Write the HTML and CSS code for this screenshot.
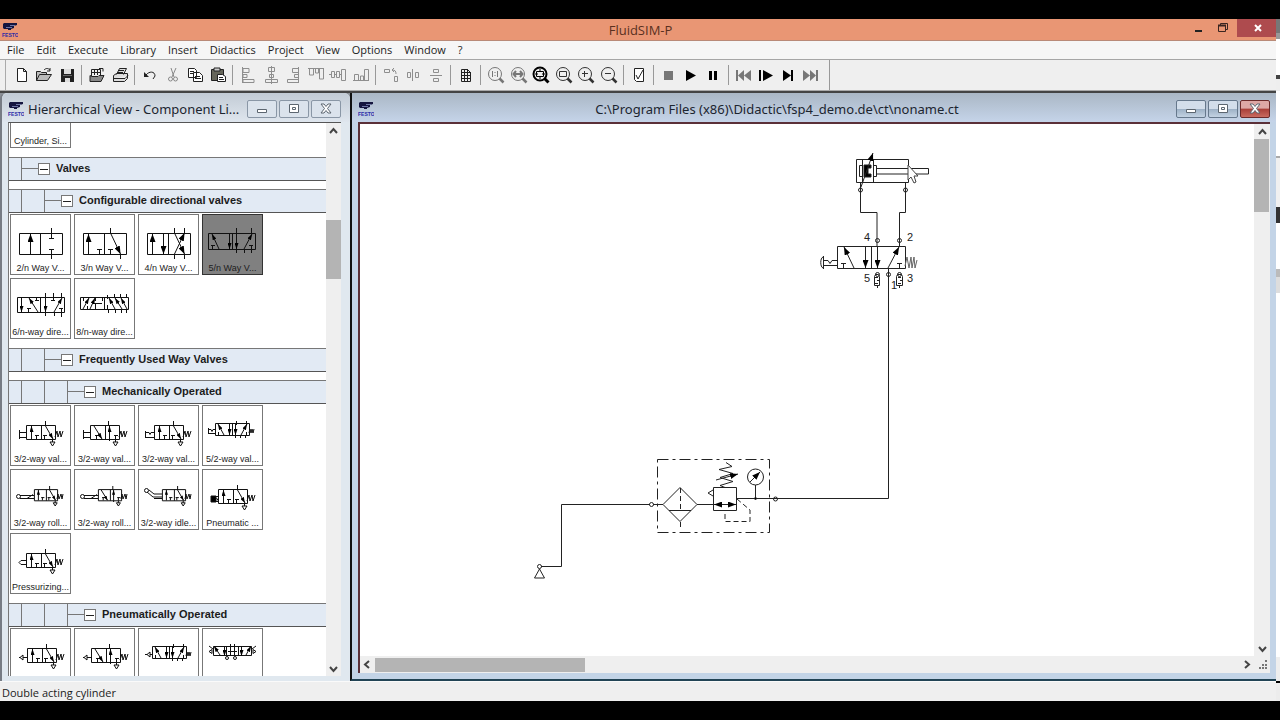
FILE: index.html
```
<!DOCTYPE html>
<html lang="en">
<head>
<meta charset="utf-8">
<title>FluidSIM-P</title>
<link rel="stylesheet" href="styles.css">
</head>
<body>
<svg class="defs" aria-hidden="true">
  <defs>
    <marker id="ar" viewBox="0 0 8 6" refX="8" refY="3" markerWidth="8" markerHeight="6" markerUnits="userSpaceOnUse" orient="auto"><path d="M0 0L8 3L0 6z" fill="#000" stroke="none"/></marker>
    <marker id="as" viewBox="0 0 6 4" refX="6" refY="2" markerWidth="6" markerHeight="4" markerUnits="userSpaceOnUse" orient="auto"><path d="M0 0L6 2L0 4z" fill="#000" stroke="none"/></marker>
    <symbol id="festo" viewBox="0 0 16 16">
      <path d="M1 2l1-1h13v2l-3 1v2l-3 1v1H6V7H2L1 6z" fill="#15153f"/><path d="M4 5.500h6M8 3.500h5" stroke="#6f76a5" fill="none"/>
      <text x="0" y="15" font-size="5" font-weight="700" font-family="Liberation Sans, sans-serif" fill="#2a2aa8">FESTO</text>
    </symbol>
    <symbol id="v32" viewBox="0 0 60 45" overflow="visible">
      <path d="M15.500 19.500h29v14h-29zM30.500 19.500v14M25.500 33v-4M24 29.500h4M33.500 33v-4M32 29.500h4M34.500 15v5"/><path d="M20.500 33V20" marker-end="url(#as)"/><path d="M34.500 20L42 33" marker-end="url(#as)"/><path d="M41.500 33v3M39 36h5l-2.500 4z"/>
    </symbol>
    <symbol id="v32b" viewBox="0 0 60 45" overflow="visible">
      <path d="M15.500 19.500h29v14h-29zM30.500 19.500v14M21.500 33v-4M20 29.500h4M40.500 33v-4M39 29.500h4M33.500 15v5"/><path d="M19 20L27 33" marker-end="url(#as)"/><path d="M34.500 35V20" marker-end="url(#as)"/><path d="M40.500 33v3M38 36h5l-2.500 4z"/>
    </symbol>
    <symbol id="v52" viewBox="0 0 60 45" overflow="visible">
      <path d="M12.500 17.500h34v12h-34zM29.500 17.500v12M15.500 29v-3M33.500 15v4M43.500 15v4M43.500 30v-4M32.500 29v3M37.500 29v3M42.500 29v3"/><path d="M21 29L15 18" marker-end="url(#as)"/><path d="M26.500 18v11" marker-end="url(#as)"/><path d="M32.500 18v11" marker-end="url(#as)"/><path d="M38 29L44 18" marker-end="url(#as)"/>
    </symbol>
    <symbol id="spring" viewBox="0 0 60 45" overflow="visible"><path d="M44 31l2-6 1 6 2-6 1 6 2-6"/></symbol>
  </defs>
</svg>
<div class="screen">
<main class="app">
  <header class="titlebar">
    <svg class="logo"><use href="#festo"/></svg>
    <h1>FluidSIM-P</h1>
    <div class="sysbtns">
      <button aria-label="Minimize"><svg viewBox="0 0 24 18"><path d="M8 12h7" stroke="#222" stroke-width="2"/></svg></button>
      <button aria-label="Restore"><svg viewBox="0 0 24 18"><path d="M7.500 6.500h7v6h-7zM9.500 6V4.500h7v6H15" fill="none" stroke="#3a2520"/><path d="M7 6.500h8" stroke="#3a2520" stroke-width="2"/></svg></button>
      <button class="quit" aria-label="Close"><svg viewBox="0 0 24 18"><path d="M10 6l6 6M16 6l-6 6" stroke="#fff" stroke-width="2"/></svg></button>
    </div>
  </header>
  <nav class="menubar">
    <button>File</button><button>Edit</button><button>Execute</button><button>Library</button><button>Insert</button><button>Didactics</button><button>Project</button><button>View</button><button>Options</button><button>Window</button><button>?</button>
  </nav>
  <div class="toolbar" role="toolbar">
    <div class="grp g3">
      <button aria-label="New"><svg viewBox="0 0 18 18"><path d="M4.500 2.500h6l3 3v10h-9zM10.500 2.500v3h3" fill="#fff" stroke="#222"/></svg></button>
      <button aria-label="Open"><svg viewBox="0 0 18 18"><path d="M1.500 14.500v-9h4l1 1h5v2M1.500 14.500l3-6h12l-4 6z" fill="#bbb" stroke="#222"/><path d="M9 4c2-2 4-2 6 0m0-2v3h-3" fill="none" stroke="#222"/></svg></button>
      <button aria-label="Save"><svg viewBox="0 0 18 18"><path d="M3 3h13v13H3z" fill="#222"/><path d="M6 3h7v5H6zM7 12h5v4H7z" fill="#ddd"/><path d="M5 9h9v1H5z" fill="#666"/></svg></button>
    </div><i class="sep"></i>
    <div class="grp g2">
      <button aria-label="Preview"><svg viewBox="0 0 18 18"><path d="M3.500 10V3.500h9V9M6.500 3v6M9.500 3v6M3 6.500h10" fill="none" stroke="#222"/><path d="M2 15.500V9.500l2 1h6l1-1h5l-3 6z" fill="#888" stroke="#222"/><path d="M11 2.500h4v3" fill="none" stroke="#222"/></svg></button>
      <button aria-label="Print"><svg viewBox="0 0 18 18"><path d="M5.500 8.500l3-6h7l-3 6M2.500 9.500l3-2h11v5l-3 3h-11zM3 12.500h11l3-3M8 4.500h5M7 6.500h5" fill="#ddd" stroke="#222"/></svg></button>
    </div><i class="sep"></i>
    <div class="grp g4">
      <button aria-label="Undo"><svg viewBox="0 0 18 18"><path d="M3 6v5h5z" fill="#222"/><path d="M5 9c3-4 9-4 9 1l-2 3" fill="none" stroke="#222"/></svg></button>
      <button aria-label="Cut"><svg viewBox="0 0 18 18"><path d="M7 2l3 9M12 2l-4 9" fill="none" stroke="#888"/><circle cx="6.500" cy="13" r="2" fill="none" stroke="#888"/><circle cx="11.500" cy="13" r="2" fill="none" stroke="#888"/></svg></button>
      <button aria-label="Copy"><svg viewBox="0 0 18 18"><path d="M2.500 2.500h6l2 2v7h-8zM7.500 6.500h6l3 3v6h-9zM4 5.500h4M4 7.500h3M9 10.500h5M9 12.500h6" fill="#fff" stroke="#222"/></svg></button>
      <button aria-label="Paste"><svg viewBox="0 0 18 18"><path d="M2.500 3.500h12v11h-12z" fill="#66665a" stroke="#222"/><path d="M5 2h6v3H5z" fill="#ccc" stroke="#222"/><path d="M8.500 8.500h5l3 2v5h-8zM10 11.500h4M10 13.500h5" fill="#fff" stroke="#222"/></svg></button>
    </div><i class="sep"></i>
    <div class="grp g6 dim">
      <button aria-label="Align left"><svg viewBox="0 0 18 18"><path d="M3.500 1v16M4 2.500h6v4H4zM4 8.500h4v3H4zM4 13.500h11v3H4z"/></svg></button>
      <button aria-label="Align center"><svg viewBox="0 0 18 18"><path d="M9.500 0v18M6.500 1.500h6v4h-6zM7.500 8.500h4v3h-4zM3.500 13.500h12v3h-12z"/></svg></button>
      <button aria-label="Align right"><svg viewBox="0 0 18 18"><path d="M14.500 1v16M8.500 2.500h6v4h-6zM10.500 8.500h4v3h-4zM3.500 13.500h11v3h-11z"/></svg></button>
      <button aria-label="Align top"><svg viewBox="0 0 18 18"><path d="M1 2.500h16M2.500 3v6h4V3M8.500 3v4h3V3M12.500 3v10h4V3"/></svg></button>
      <button aria-label="Align middle"><svg viewBox="0 0 18 18"><path d="M2.500 5.500h3v6h-3zM7.500 5.500h3v6h-3zM12.500 3.500h4v11h-4zM0 8.500h2M5 8.500h2M10 8.500h2"/></svg></button>
      <button aria-label="Align bottom"><svg viewBox="0 0 18 18"><path d="M1 14.500h16M2.500 14V8.500h4V14M8.500 14v-4h3v4M12.500 14V3.500h4V14"/></svg></button>
    </div><i class="sep"></i>
    <div class="grp g3 dim">
      <button aria-label="Rotate"><svg viewBox="0 0 18 18"><path d="M2.500 3.500h5v3h-5zM12.500 10.500h3v5h-3zM14 8c0-3-1-4-4-4m2-2l-2 2 2 2"/></svg></button>
      <button aria-label="Mirror horizontally"><svg viewBox="0 0 18 18"><path d="M8.500 3v12M3.500 6.500h3v5h-3zM11.500 6.500h3v5h-3z"/></svg></button>
      <button aria-label="Mirror vertically"><svg viewBox="0 0 18 18"><path d="M3 9.500h12M6.500 3.500h5v3h-5zM6.500 12.500h5v3h-5z"/></svg></button>
    </div><i class="sep"></i>
    <div class="grp g1">
      <button aria-label="Grid"><svg viewBox="0 0 18 18"><path d="M4.500 3.500h6l3 3v9h-9zM7.500 3v12M10.500 3v12M4 6.500h10M4 9.500h10M4 12.500h10" fill="none" stroke="#222"/></svg></button>
    </div><i class="sep"></i>
    <div class="grp g6 mag">
      <button aria-label="Original size" class="off"><svg viewBox="0 0 18 18"><circle cx="8" cy="8" r="6.500"/><path d="M12.500 12.500l4 4" stroke-width="2.500"/><path d="M5.500 5v6M10.500 5v6M8 6v1M8 9v1"/></svg></button>
      <button aria-label="Previous view" class="off"><svg viewBox="0 0 18 18"><circle cx="8" cy="8" r="6.500"/><path d="M12.500 12.500l4 4" stroke-width="2.500"/><path d="M4 8h8M6 5L3.500 8 6 11M10 5l2.500 3L10 11" stroke-width="2"/></svg></button>
      <button aria-label="Fit to window" class="bold"><svg viewBox="0 0 18 18"><circle cx="8" cy="8" r="6.500" stroke-width="2"/><path d="M12.500 12.500l4 4" stroke-width="3"/><path d="M4.500 5.500h7v5h-7zM3 8h3M10 8h3M8 3v3M8 10v3"/></svg></button>
      <button aria-label="Zoom area"><svg viewBox="0 0 18 18"><circle cx="8" cy="8" r="6.500"/><path d="M12.500 12.500l4 4" stroke-width="2.500"/><path d="M4.500 5.500h7v5h-7z"/></svg></button>
      <button aria-label="Zoom in"><svg viewBox="0 0 18 18"><circle cx="8" cy="8" r="6.500"/><path d="M12.500 12.500l4 4" stroke-width="2.500"/><path d="M5 7.500h6M7.500 5v6"/></svg></button>
      <button aria-label="Zoom out"><svg viewBox="0 0 18 18"><circle cx="8" cy="8" r="6.500"/><path d="M12.500 12.500l4 4" stroke-width="2.500"/><path d="M5 7.500h6"/></svg></button>
    </div><i class="sep"></i>
    <div class="grp g1">
      <button aria-label="Check circuit"><svg viewBox="0 0 18 18"><path d="M4.500 2.500h9v13h-7l-2-2z" fill="#fff" stroke="#222"/><path d="M6 9l2 4 5-9" fill="none" stroke="#222"/></svg></button>
    </div><i class="sep"></i>
    <div class="grp g3 play">
      <button aria-label="Stop" class="off"><svg viewBox="0 0 18 18"><path d="M4 5h9v9H4z"/></svg></button>
      <button aria-label="Start"><svg viewBox="0 0 18 18"><path d="M4 4l10 5.500L4 15z"/></svg></button>
      <button aria-label="Pause"><svg viewBox="0 0 18 18"><path d="M4 5h3v9H4zM9 5h3v9H9z"/></svg></button>
    </div><i class="sep"></i>
    <div class="grp g4 play">
      <button aria-label="Reset" class="off"><svg viewBox="0 0 18 18"><path d="M1 4h2v11H1zM9 4v11L3 9.500zM16 4v11l-7-5.500z"/></svg></button>
      <button aria-label="Single step"><svg viewBox="0 0 18 18"><path d="M1 4h2v11H1zM5 4l10 5.500L5 15z"/></svg></button>
      <button aria-label="Step to change"><svg viewBox="0 0 18 18"><path d="M3 4l8 5.500L3 15zM11 4h2v11h-2z"/></svg></button>
      <button aria-label="Next topic" class="off"><svg viewBox="0 0 18 18"><path d="M0 4l7 5.500L0 15zM7 4l6 5.500L7 15zM13 4h2v11h-2z"/></svg></button>
    </div><i class="sep end"></i>
  </div>

  <div class="workspace">
    <section class="mdi library">
      <header class="mdi-title">
        <svg class="logo"><use href="#festo"/></svg>
        <h2>Hierarchical View - Component Li...</h2>
        <div class="mdi-btns">
          <button aria-label="Minimize"><svg viewBox="0 0 28 16"><path d="M9.500 8.500h9v3h-9z"/></svg></button>
          <button aria-label="Maximize"><svg viewBox="0 0 28 16"><path d="M9.500 3.500h9v8h-9zM12.500 6.500h3v2h-3z"/></svg></button>
          <button aria-label="Close"><svg viewBox="0 0 28 16"><path d="M9 3h3l2 2.500L16 3h3l-3.500 4.500L19 12h-3l-2-2.500-2 2.500H9l3.500-4.500z"/></svg></button>
        </div>
      </header>
      <div class="client">
        <div class="list">
          <div class="list-in">
            <div class="thumbs"><button class="thumb"><svg></svg><span>Cylinder, Si...</span></button></div>
            <div class="head"><i class="tick"></i><i class="box"></i><h3>Valves</h3></div>
            <div class="head"><i class="line"></i><i class="tick"></i><i class="box"></i><h3>Configurable directional valves</h3></div>
            <div class="thumbs">
              <button class="thumb"><svg viewBox="0 0 59 45"><path d="M8.500 18.500h43v21h-43zM29.500 18v21M40.500 13v10M38 23.500h5M40.500 44V34M38 34.500h5"/><path d="M19.500 39V19" marker-end="url(#ar)"/></svg><span>2/n Way V...</span></button>
              <button class="thumb"><svg viewBox="0 0 59 45"><path d="M8.500 18.500h43v21h-43zM29.500 18v21M24.500 39v-5M22 34.500h5M35.500 39v-5M33 34.500h5M35.500 13v5M45.500 39v5"/><path d="M13.500 39V19" marker-end="url(#ar)"/><path d="M35.500 18L45.500 39" marker-end="url(#ar)"/></svg><span>3/n Way V...</span></button>
              <button class="thumb"><svg viewBox="0 0 59 45"><path d="M8.500 18.500h43v21h-43zM29.500 18v21M35.500 13v5M45.500 13v5M35.500 39v5M45.500 39v5"/><path d="M13.500 39V19" marker-end="url(#ar)"/><path d="M24.500 19v20" marker-end="url(#ar)"/><path d="M35.500 18L45.500 39" marker-end="url(#ar)"/><path d="M35.500 39L45.500 18" marker-end="url(#ar)"/></svg><span>4/n Way V...</span></button>
              <button class="thumb sel"><svg viewBox="0 0 59 45"><path d="M5.500 18.500h47v16h-47zM29.500 18v16M9.500 34v-4M8 30.500h4M48.500 34v-4M46 30.500h4M33.500 13v6M48.500 13v6M33.500 34v4M41.500 34v4M48.500 34v4"/><path d="M16 34L9 19" marker-end="url(#as)"/><path d="M26.500 19v15" marker-end="url(#as)"/><path d="M33.500 19v15" marker-end="url(#as)"/><path d="M41 34L49 19" marker-end="url(#as)"/></svg><span>5/n Way V...</span></button>
              <button class="thumb"><svg viewBox="0 0 59 45"><path d="M6.500 18.500h47v15h-47zM29.500 18v15M17.500 33v-4M16 29.500h4M25.500 18v3M24 21.500h4M42.500 14v8M40 21.500h4M34.500 14v5M50.500 14v5M34.500 33v4M43.500 33v4M50.500 38v-8M48 29.500h4"/><path d="M10.500 19v14" marker-end="url(#as)"/><path d="M27 33L18 19" marker-end="url(#as)"/><path d="M34.500 19v14" marker-end="url(#as)"/><path d="M43 33L51 19" marker-end="url(#as)"/></svg><span>6/n-way dire...</span></button>
              <button class="thumb"><svg viewBox="0 0 59 45"><path d="M5.500 18.500h48v12h-48zM29.500 18v12M8.500 18v4M20.500 18v4M27.500 18v4M18 24.500h9M20.500 30v-6M12.500 30v-3M32.500 16v4M39.500 15v4M45.500 15v4M51.500 15v4M33.500 30v4M40.500 30v4M46.500 30v4M51.500 30v4M32.500 30v-4"/><path d="M8 30L14 19" marker-end="url(#as)"/><path d="M15 30L20 19" marker-end="url(#as)"/><path d="M40 30L34 19" marker-end="url(#as)"/><path d="M47 30L40 19" marker-end="url(#as)"/><path d="M52 30L46 19" marker-end="url(#as)"/></svg><span>8/n-way dire...</span></button>
            </div>
            <div class="head"><i class="line"></i><i class="tick"></i><i class="box"></i><h3>Frequently Used Way Valves</h3></div>
            <div class="head"><i class="line"></i><i class="line"></i><i class="tick"></i><i class="box"></i><h3>Mechanically Operated</h3></div>
            <div class="thumbs">
              <button class="thumb"><svg viewBox="0 0 59 45"><use href="#v32" width="60" height="45"/><use href="#spring" width="60" height="45"/><path d="M8.500 24v9M9 26.500h6M9 31.500h6"/></svg><span>3/2-way val...</span></button>
              <button class="thumb"><svg viewBox="0 0 59 45"><use href="#v32b" width="60" height="45"/><use href="#spring" width="60" height="45"/><path d="M8.500 24v9M9 26.500h6M9 31.500h6"/></svg><span>3/2-way val...</span></button>
              <button class="thumb"><svg viewBox="0 0 59 45"><use href="#v32" width="60" height="45"/><use href="#spring" width="60" height="45"/><path d="M6.500 25v7M7 26.500h3l1 2 1-2h3M7 31.500h8"/></svg><span>3/2-way val...</span></button>
              <button class="thumb"><svg viewBox="0 0 59 45"><use href="#v52" width="60" height="45"/><path d="M5.500 22v6M6 23.500h2l1 2 1-2h2M6 27.500h6M46 27l1-4 1 4 1-4 1 4 1-4"/></svg><span>5/2-way val...</span></button>
              <button class="thumb"><svg viewBox="0 0 59 45"><use href="#v32" x="11" y="4" width="48" height="36"/><circle cx="7.500" cy="26.500" r="2"/><path d="M9 25.500h14M9 28.500h7l6-4M16 28.500h7M46 29l1-5 1 5 2-5 1 5 1-5"/></svg><span>3/2-way roll...</span></button>
              <button class="thumb"><svg viewBox="0 0 59 45"><use href="#v32b" x="11" y="4" width="48" height="36"/><circle cx="7.500" cy="26.500" r="2"/><path d="M9 25.500h14M9 28.500h7l6-4M16 28.500h7M46 29l1-5 1 5 2-5 1 5 1-5"/></svg><span>3/2-way roll...</span></button>
              <button class="thumb"><svg viewBox="0 0 59 45"><use href="#v32" x="11" y="4" width="48" height="36"/><circle cx="7.500" cy="20.500" r="2"/><path d="M8 22l6 5h9M10 20l5 4h8M15 28.500h8M46 29l1-5 1 5 2-5 1 5 1-5"/></svg><span>3/2-way idle...</span></button>
              <button class="thumb"><svg viewBox="0 0 59 45"><use href="#v32" width="60" height="45"/><use href="#spring" width="60" height="45"/><path d="M8 26h5v6H8z" class="fill"/><path d="M13 26.500h3M13 31.500h3M13.500 28l2 3"/></svg><span>Pneumatic ...</span></button>
              <button class="thumb"><svg viewBox="0 0 59 45"><use href="#v32" width="60" height="45"/><use href="#spring" width="60" height="45"/><path d="M15 26.500h-5l-2 2 2 2h5"/></svg><span>Pressurizing...</span></button>
            </div>
            <div class="head"><i class="line"></i><i class="line"></i><i class="tick"></i><i class="box"></i><h3>Pneumatically Operated</h3></div>
            <div class="thumbs">
              <button class="thumb" aria-label="3/2-way valve"><svg viewBox="0 0 59 45"><use href="#v32" x="1" width="60" height="45"/><use href="#spring" x="1" width="60" height="45"/><path d="M8 28.500h1M12 26l-3 2.500 3 2.500zM12 28.500h4"/></svg></button>
              <button class="thumb" aria-label="3/2-way valve"><svg viewBox="0 0 59 45"><use href="#v32b" x="1" width="60" height="45"/><use href="#spring" x="1" width="60" height="45"/><path d="M8 28.500h1M12 26l-3 2.500 3 2.500zM12 28.500h4"/></svg></button>
              <button class="thumb" aria-label="5/2-way valve"><svg viewBox="0 0 59 45"><use href="#v52" x="1" width="60" height="45"/><path d="M6 25.500h2M11 23l-3 2.500 3 2.500zM11 25.500h2M47 27l1-4 1 4 1-4 1 4 1-4"/></svg></button>
              <button class="thumb" aria-label="5/3-way valve"><svg viewBox="0 0 59 45"><path d="M10.500 17.500h38v9h-38zM23.500 17v9M35.500 17v9M27.500 15v12M31.500 15v12M25 22.500h9M6 22.500l3-2v4zM53 22.500l-3-2v4zM6 17l4 3M53 17l-4 3"/><path d="M17 26L11 17" marker-end="url(#as)"/><path d="M21.500 18v9" marker-end="url(#as)"/><path d="M38.500 18v9" marker-end="url(#as)"/><path d="M43 26L48 17" marker-end="url(#as)"/><circle cx="24" cy="29" r="1.500"/><circle cx="32" cy="29" r="1.500"/></svg></button>
            </div>
          </div>
        </div>
        <div class="vscroll vs-lib"><button aria-label="Up"><svg viewBox="0 0 15 15"><path d="M4 10l3.500-4L11 10"/></svg></button><i></i><b></b><i></i><button aria-label="Down"><svg viewBox="0 0 15 15"><path d="M4 6l3.500 4L11 6"/></svg></button></div>
      </div>
    </section>

    <section class="mdi circuit">
      <header class="mdi-title">
        <svg class="logo"><use href="#festo"/></svg>
        <h2>C:\Program Files (x86)\Didactic\fsp4_demo.de\ct\noname.ct</h2>
        <div class="mdi-btns">
          <button aria-label="Minimize"><svg viewBox="0 0 28 16"><path d="M9.500 8.500h9v3h-9z"/></svg></button>
          <button aria-label="Maximize"><svg viewBox="0 0 28 16"><path d="M9.500 3.500h9v8h-9zM12.500 6.500h3v2h-3z"/></svg></button>
          <button class="x" aria-label="Close"><svg viewBox="0 0 28 16"><path d="M9 3h3l2 2.500L16 3h3l-3.500 4.500L19 12h-3l-2-2.500-2 2.500H9l3.500-4.500z"/></svg></button>
        </div>
      </header>
      <div class="client">
        <div class="canvas">
          <svg class="drawing" width="894" height="532" viewBox="360 124 894 532" role="img" aria-label="Pneumatic circuit">
            <!-- double acting cylinder -->
            <path d="M856.500 159.500h52v23h-52zM862.500 160v22M873.500 160v22M876.500 168.500h52v5.500h-52zM859.500 165.500h3v11h-3zM873.500 165.500h3v11h-3z"/>
            <path d="M864 165h7v3h-3v6h3v3h-7z" class="fill"/>
            <path d="M861 187L873 153" marker-end="url(#ar)"/>
            <circle cx="860.500" cy="190" r="2"/><circle cx="905.500" cy="190" r="2"/>
            <path d="M860.500 183v29.500h16.500V247M905.500 183v29.500h-6V246"/>
            <circle cx="877.500" cy="240.500" r="2"/><circle cx="899.500" cy="240.500" r="2"/>
            <!-- 5/2-way valve -->
            <path d="M837.500 246.500h68v22h-68zM871.500 246v22M843.500 268v-5M841 263.500h5M899.500 268v-5M897 263.500h5"/>
            <path d="M854 268L844 247" marker-end="url(#ar)"/><path d="M865.500 247v21" marker-end="url(#ar)"/><path d="M877.500 247v21" marker-end="url(#ar)"/><path d="M888 268L899 247" marker-end="url(#ar)"/>
            <path d="M905 266l2-9 2 11 2-11 1 11 2-11 1 11 2-8" stroke="#666"/>
            <path d="M823.500 256v13M823 257c-3 1-3 10 0 11M824 260.500h4l2 3 2-3h5M824 265.500h13"/>
            <path d="M874.500 276.500l1-2h3l1 2v9h-5zM896.500 276.500l1-2h4l1 2v9h-6zM875 277.500h3M877 280.500h3M875 283.500h3M898 277.500h3M900 280.500h3M898 283.500h3M877.500 285v3M899.500 285v3"/>
            <circle cx="877.500" cy="274.500" r="2"/><circle cx="888.500" cy="274.500" r="2"/><circle cx="899.500" cy="274.500" r="2"/>
            <path d="M888.500 269v229.500H736"/>
            <text x="864" y="241">4</text><text x="907" y="241">2</text><text x="864" y="282">5</text><text x="907" y="282">3</text><text x="891" y="289">1</text>
            <!-- service unit -->
            <path d="M657.500 459.500h112v73h-112z" stroke-dasharray="11 4 3 4"/>
            <circle cx="651.500" cy="504.500" r="2"/>
            <path d="M663 504.500l17-17 17 17-17 17zM669 510.500h22M697 504.500h16M653 504.500h10"/>
            <path d="M680.500 488v22M680.500 522v6" stroke-dasharray="5 3"/>
            <path d="M713.500 487.500h23v23h-23zM713 490l-5 3 5 3M725 487.500l-5-2 13-4-13-4 13-4-14-4 13-3-6-4"/>
            <path d="M725 504.500h-11" marker-end="url(#ar)"/><path d="M725 504.500h11" marker-end="url(#ar)"/><path d="M716 480l22-6" marker-end="url(#ar)"/><path d="M750 482l10-10" marker-end="url(#ar)"/>
            <circle cx="755.500" cy="477" r="8"/><path d="M755.500 485v13"/><circle cx="755.500" cy="498.500" r="1" class="fill"/>
            <path d="M737 499l13 11v11.500h-25V510" stroke-dasharray="5 3"/>
            <circle cx="775.500" cy="499" r="2"/>
            <!-- compressed air supply -->
            <path d="M541 566.500h20.500v-62H650M539.500 569l-5 9h10z"/><circle cx="539.500" cy="566.500" r="2"/>
            <path d="M908 165v15l3-3 3 6 2-1-2-6h4z" fill="#fff" stroke="#444"/>
          </svg>
        </div>
        <div class="vscroll vs-cir"><button aria-label="Up"><svg viewBox="0 0 15 15"><path d="M4 10l3.500-4L11 10"/></svg></button><i></i><b></b><i></i><button aria-label="Down"><svg viewBox="0 0 15 15"><path d="M4 6l3.500 4L11 6"/></svg></button></div>
        <div class="hscroll"><button aria-label="Left"><svg viewBox="0 0 15 15"><path d="M9 4L5 7.500 9 11"/></svg></button><b></b><i></i><button aria-label="Right"><svg viewBox="0 0 15 15"><path d="M6 4l4 3.500L6 11"/></svg></button></div>
        <svg class="grip" viewBox="0 0 16 16"><path d="M11 5h2M8 9h2M11 9h2M5 12h2M8 12h2M11 12h2" stroke="#777" stroke-width="2"/></svg>
      </div>
    </section>
  </div>
  <footer class="status">Double acting cylinder</footer>
</main>
<aside class="behind"></aside>
</div>
</body>
</html>
```
FILE: styles.css
```
* { box-sizing: border-box; }
body { margin: 0; background: #000; font-family: "Open Sans", "Noto Sans", sans-serif; color: #1c1c1c; }
h1, h2, h3 { margin: 0; font-weight: 400; }
button { border: 0; padding: 0; margin: 0; background: none; font: inherit; color: inherit; }
.defs { position: absolute; width: 0; height: 0; }
symbol path { vector-effect: non-scaling-stroke; }
.screen { height: 100vh; padding: 19px 0; display: flex; overflow: hidden; }
.app { flex: 1; min-width: 0; display: flex; flex-direction: column; background: #efefef; }
.behind { width: 4px; background: linear-gradient(#777 0 14px, #999 14px 20px, #fff 20px 56px, #444 56px 60px, #eee 60px 72px, #fff 72px 137px, #aaa 137px 139px, #f0f0f0 139px 188px, #333 188px 204px, #fff 204px 250px, #bbb 250px 258px, #ddd 258px 274px, #fff 274px 638px, #eee 638px 662px, #000 662px 664px, #ececec 664px); }
.logo { width: 16px; height: 16px; flex: none; display: block; }

.titlebar { height: 22px; display: flex; align-items: center; background: #e99674; border-bottom: 1px solid #b98a78; padding-left: 2px; }
.titlebar h1 { flex: 1; text-align: center; font-size: 13px; line-height: 20px; color: #59301f; padding-left: 76px; }
.sysbtns { display: flex; align-self: flex-start; }
.sysbtns button { width: 24px; height: 18px; }
.sysbtns svg { width: 24px; height: 18px; display: block; margin: 0 auto; }
.sysbtns .quit { width: 39px; background: #ae4b4e; margin-left: 2px; }

.menubar { height: 19px; display: flex; background: #f6f6f6; border-bottom: 1px solid #a6a6a6; padding-left: 1px; }
.menubar button { font-size: 11px; line-height: 16px; padding: 0 6px 1px; }

.toolbar { height: 31px; display: flex; align-items: center; padding-left: 11px; border-bottom: 1px solid #aaa; box-shadow: inset 5px 0 #efefef, inset 6px 0 #aaa; }
.grp { display: flex; }
.grp button { flex: 1; }
.grp svg { width: 18px; height: 18px; display: block; margin: 0 auto; }
.g1 { width: 22px; } .g2 { width: 45px; } .g3 { width: 67px; } .g4 { width: 90px; } .g6 { width: 135px; }
.sep { width: 8px; height: 20px; background: linear-gradient(90deg, transparent 3px, #999 3px 4px, transparent 4px); }
.sep.end { height: 30px; width: 12px; background: linear-gradient(90deg, transparent 6px, #999 6px 7px, transparent 7px); }
.dim svg { fill: none; stroke: #8e8e8e; }
.mag svg { fill: none; stroke: #333; }
.mag .off svg { stroke: #777; }
.mag .bold svg { stroke: #000; }
.play svg { fill: #000; }
.play .off svg { fill: #777; }

.workspace { flex: 1; min-height: 0; display: grid; grid-template-columns: 350px 1fr; border-top: 2px solid #444; background: #8b9097; }
.mdi { display: flex; flex-direction: column; min-width: 0; min-height: 0; }
.library { background: #e0e8ef; border-left: 2px solid #777c84; border-radius: 6px 6px 0 0; padding: 0 9px 5px 6px; }
.circuit { background: #c3d4e7; border-left: 2px solid #111; border-bottom: 2px solid #245; padding: 0 6px 6px 6px; }
.library .mdi-title { background: linear-gradient(#c2cbd5, #dfe6ee); margin: 0 -9px 0 -6px; padding: 3px 9px 0 6px; border-radius: 6px 6px 0 0; }
.circuit .mdi-title { background: linear-gradient(#aab7c5, #c5d4e9); margin: 0 -6px; padding: 3px 6px 0; }
.mdi-title { height: 29px; display: flex; align-items: center; flex: none; }
.mdi-title h2 { flex: 1; font-family: "Noto Sans", "Open Sans", sans-serif; font-size: 13px; line-height: 20px; white-space: nowrap; color: #1c2530; padding: 0 0 0 4px; }
.circuit h2 { text-align: center; }
.mdi-btns { display: flex; gap: 2px; }
.mdi-btns button { width: 30px; height: 18px; border: 1px solid #8a97a6; border-radius: 2px; background: #dbe3ec; }
.circuit .mdi-btns button { background: linear-gradient(#d3deeb 50%, #9cb0c5 50%, #c3d2e2); border-color: #66788c; }
.circuit .mdi-btns button.x { background: linear-gradient(#dda7a5 45%, #a93e38 50%, #c96a5f); border-color: #6b2a2a; }
.mdi-btns svg { width: 28px; height: 16px; display: block; fill: #fff; stroke: #5c6670; }

.client { flex: 1; min-height: 0; background: #efefef; border-top: 1px solid #555; border-left: 1px solid #777; display: grid; }
.library .client { grid-template-columns: 1fr 15px; }
.circuit .client { grid-template: 1fr 17px / 1fr 16px; border-top: 2px solid #5b3038; border-left: 2px solid #5b3038; }
.list, .canvas { background: #fff; overflow: hidden; min-width: 0; min-height: 0; }
.list-in { margin-top: -37px; }
.head { height: 24px; display: flex; align-items: center; background: #e2eaf4; border-top: 1px solid #777; border-bottom: 1px solid #555; margin-bottom: 8px; padding-left: 12px; }
.head + .thumbs { margin-top: -8px; }
.head h3 { font: 700 11px/20px "Liberation Sans", Arial, sans-serif; padding: 0 0 2px 6px; }
.line { width: 23px; height: 22px; border-left: 1px solid #777; }
.tick { width: 17px; height: 22px; border-left: 1px solid #777; background: linear-gradient(transparent 10px, #777 10px 11px, transparent 11px); }
.box { width: 12px; height: 12px; border: 1px solid #777; background: linear-gradient(#222, #222) center / 8px 1px no-repeat #fff; }
.thumbs { display: grid; grid-template-columns: repeat(4, 61px); gap: 3px; padding: 1px 0 9px 1px; }
.thumb { width: 61px; height: 61px; border: 1px solid #777; background: #fff; display: flex; flex-direction: column; align-items: center; overflow: hidden; }
.thumb.sel { background: #808080; border-color: #333; }
.thumb svg { width: 59px; height: 47px; flex: none; fill: none; stroke: #111; }
.thumb svg[viewBox] { height: 45px; margin-bottom: 2px; }
.thumb svg .fill, .drawing .fill { fill: #000; }
.thumb span { font: 9px/12px "Liberation Sans", Arial, sans-serif; white-space: nowrap; }
.drawing { display: block; fill: none; stroke: #222; }
.drawing text { font: 11px "Liberation Sans", Arial, sans-serif; fill: #222; stroke: none; }

.vscroll { display: flex; flex-direction: column; background: #efefef; min-height: 0; }
.vscroll b, .hscroll b { background: #b4b4b4; }
.vscroll button { height: 15px; }
.vscroll svg, .hscroll svg { width: 15px; height: 15px; display: block; margin: 0 auto; fill: none; stroke: #444; stroke-width: 2; }
.vs-lib i:nth-of-type(1) { flex: 82; } .vs-lib b { flex: 59; } .vs-lib i:nth-of-type(2) { flex: 381; }
.vs-cir b { flex: 73; margin-right: 1px; } .vs-cir i:nth-of-type(1) { flex: 0; } .vs-cir i:nth-of-type(2) { flex: 428; }
.hscroll { display: flex; align-items: center; background: #efefef; }
.hscroll b { flex: 210; height: 14px; } .hscroll i { flex: 653; }
.hscroll button { width: 15px; }
.grip { width: 16px; height: 16px; }
.status { height: 20px; font-size: 11px; line-height: 19px; padding: 1px 2px 0; background: #efefef; border-top: 1px solid #fafafa; }
```
